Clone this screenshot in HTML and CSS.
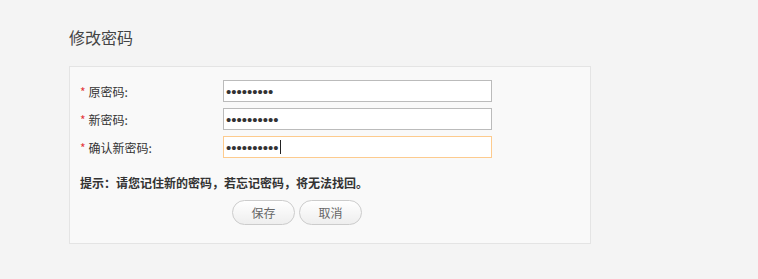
FILE: index.html
```html
<!DOCTYPE html>
<html lang="zh-CN">
<head>
    <meta charset="UTF-8">
    <meta name="viewport" content="width=device-width, initial-scale=1.0">
    <title>修改密码</title>
    <link rel="stylesheet" href="styles.css">
</head>
<body>
    <div class="page">
        <h2 class="page__title">修改密码</h2>
        <form class="pwdForm">
            <div class="pwdForm__row">
                <label class="pwdForm__label" for="oldPwd"><span class="required">*</span>原密码:</label>
                <input class="pwdForm__input" type="password" id="oldPwd" value="123456789">
            </div>
            <div class="pwdForm__row">
                <label class="pwdForm__label" for="newPwd"><span class="required">*</span>新密码:</label>
                <input class="pwdForm__input" type="password" id="newPwd" value="1234567890">
            </div>
            <div class="pwdForm__row">
                <label class="pwdForm__label" for="confirmPwd"><span class="required">*</span>确认新密码:</label>
                <div class="pwdForm__field">
                    <input class="pwdForm__input pwdForm__input--focus" type="password" id="confirmPwd" value="1234567890">
                    <span class="caret"></span>
                </div>
            </div>
            <p class="pwdForm__tip">提示：请您记住新的密码，若忘记密码，将无法找回。</p>
            <div class="pwdForm__btns">
                <button type="submit" class="btn">保存</button>
                <button type="button" class="btn">取消</button>
            </div>
        </form>
    </div>
</body>
</html>
```

FILE: styles.css
```css
* {
    box-sizing: border-box;
}
body {
    margin: 0;
    padding: 0;
    background: #f4f4f4;
    font-family: "Noto Sans CJK SC", "Liberation Sans", sans-serif;
    color: #333;
}
.page {
    padding: 25px 0 0 69px;
}
.page__title {
    margin: 0;
    height: 24px;
    line-height: 24px;
    font-size: 16px;
    font-weight: normal;
    color: #444;
}
.pwdForm {
    margin-top: 17px;
    width: 522px;
    height: 178px;
    background: #f9f9f9;
    border: 1px solid #e4e4e4;
    padding: 13px 0 0 10px;
}
.pwdForm__row {
    display: flex;
    align-items: center;
    height: 22px;
    margin-bottom: 6px;
}
.pwdForm__label {
    width: 143px;
    font-size: 12px;
    color: #333;
}
.required {
    color: #e4393c;
    margin-right: 3px;
}
.pwdForm__field {
    position: relative;
}
.pwdForm__input {
    display: block;
    width: 269px;
    height: 22px;
    border: 1px solid #bbb;
    background: #fff;
    padding: 0 2px;
    font-family: "Liberation Sans", sans-serif;
    font-size: 15px;
    color: #333;
    outline: none;
}
.pwdForm__input--focus {
    border-color: #fdcb8e;
}
/* 포커스된 입력칸의 커서 */
.caret {
    position: absolute;
    left: 57px;
    top: 4px;
    width: 1px;
    height: 14px;
    background: #222;
}
.pwdForm__tip {
    margin: 15px 0 0;
    line-height: 20px;
    font-size: 12px;
    font-weight: bold;
    color: #333;
}
.pwdForm__btns {
    display: flex;
    gap: 4px;
    margin-top: 7px;
    padding-left: 152px;
}
.btn {
    width: 63px;
    height: 25px;
    border: 1px solid #ccc;
    border-radius: 13px;
    background: linear-gradient(#fff, #eee);
    font-family: inherit;
    font-size: 12px;
    color: #666;
    cursor: pointer;
}
```
